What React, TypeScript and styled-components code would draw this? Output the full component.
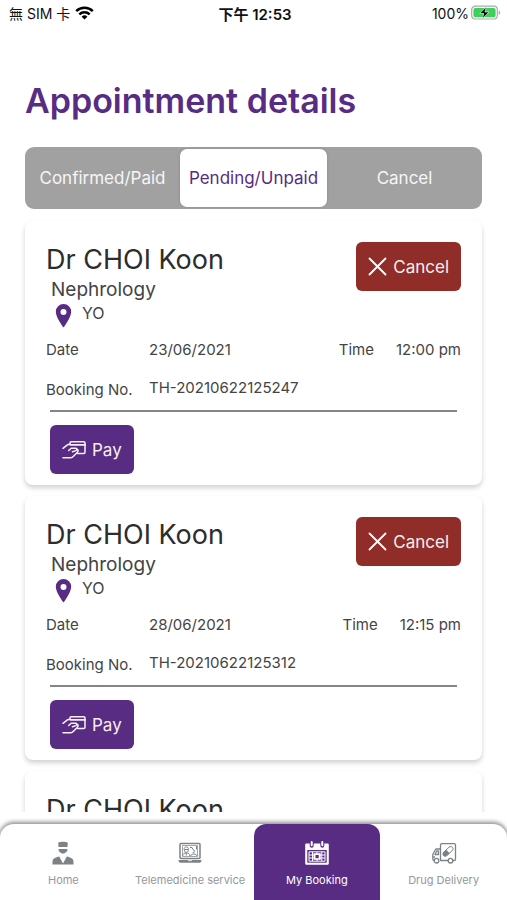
import React, { useState } from "react";
import styled, { createGlobalStyle } from "styled-components";

const purple = "#582c83";
const red = "#902d28";
const grey = "#94989b";

const GlobalStyle = createGlobalStyle`
  *, *::before, *::after { box-sizing: border-box; }
  body {
    margin: 0;
    background: #fff;
    color: #444;
    font-family: Inter, "Noto Sans CJK TC", sans-serif;
  }
  button { font: inherit; border: 0; cursor: pointer; }
  h1, h2, p, dl, dd, dt { margin: 0; font-weight: 400; }
`;

const Screen = styled.div`
  display: flex;
  flex-direction: column;
  height: 100vh;
  overflow: hidden;
`;

const StatusBar = styled.div`
  display: grid;
  grid-template-columns: 1fr auto 1fr;
  align-items: center;
  height: 28px;
  padding: 0 6px 2px 9px;
  color: #111;
  font-size: 14px;
  white-space: nowrap;
`;

const StatusSide = styled.div<{ $end?: boolean }>`
  display: flex;
  align-items: center;
  justify-content: ${(p) => (p.$end ? "flex-end" : "flex-start")};
  gap: ${(p) => (p.$end ? 2 : 5)}px;
`;

const Clock = styled.div`
  font-size: 15px;
  font-weight: 600;
`;

const Title = styled.h1`
  padding: 49px 25px 23px;
  color: ${purple};
  font-size: 34px;
  font-weight: 600;
  line-height: 47px;
`;

const Tabs = styled.div`
  display: grid;
  grid-template-columns: repeat(3, 1fr);
  flex: none;
  height: 62px;
  margin: 0 25px;
  padding: 2px;
  border-radius: 9px;
  background: #a1a1a1;
`;

const Tab = styled.button<{ $active: boolean }>`
  margin: 0 2px;
  padding: 0;
  border-radius: 7px;
  background: ${(p) => (p.$active ? "#fff" : "transparent")};
  box-shadow: ${(p) => (p.$active ? "0 0 3px rgba(0, 0, 0, 0.15)" : "none")};
  color: ${(p) => (p.$active ? purple : "#f6f6f6")};
  font-size: 17px;
`;

const List = styled.main`
  display: flex;
  flex: 1;
  flex-direction: column;
  gap: 11px;
  min-height: 0;
  overflow: hidden;
  padding: 12px 25px 0;
`;

const Card = styled.article`
  flex: none;
  padding: 21px 21px 11px;
  border-radius: 8px;
  background: #fff;
  box-shadow: 0 3px 5px rgba(0, 0, 0, 0.18);
`;

const CardHead = styled.header`
  display: flex;
  align-items: flex-start;
  justify-content: space-between;
`;

const Doctor = styled.h2`
  color: #2d2d2d;
  font-size: 27px;
  line-height: 36px;
`;

const Specialty = styled.p`
  padding-left: 5px;
  font-size: 19px;
  line-height: 23px;
`;

const Place = styled.p`
  display: flex;
  align-items: flex-start;
  gap: 10px;
  padding: 2px 0 0 9px;
  font-size: 16px;
  line-height: 21px;
`;

const ActionButton = styled.button<{ $tone: string }>`
  display: inline-flex;
  align-items: center;
  justify-content: center;
  gap: 6px;
  height: 49px;
  padding: 0 12px;
  border-radius: 6px;
  background: ${(p) => p.$tone};
  color: #f7eeee;
  font-size: 17px;
`;

const Details = styled.dl`
  display: grid;
  grid-template-columns: 103px 1fr auto;
  row-gap: 18px;
  padding-top: 12px;
  font-size: 15px;
  line-height: 20px;
`;

const TimePair = styled.div`
  display: flex;
  gap: 22px;
`;

const BookingLabel = styled.dt`
  padding-top: 2px;
`;

const BookingNumber = styled.dd`
  grid-column: 2 / 4;
`;

const CardFoot = styled.footer`
  display: flex;
  margin: 10px 4px 0;
  padding-top: 13px;
  border-top: 2px solid #858585;
`;

const Nav = styled.nav`
  display: grid;
  grid-template-columns: repeat(4, 1fr);
  flex: none;
  height: 76px;
  margin-top: 12px;
  border-radius: 14px 14px 0 0;
  background: #fff;
  box-shadow: 0 -1px 4px 1px rgba(0, 0, 0, 0.45);
`;

const NavLink = styled.a<{ $active?: boolean }>`
  display: flex;
  flex-direction: column;
  align-items: center;
  gap: 6px;
  padding-top: 16px;
  border-radius: 12px 12px 0 0;
  background: ${(p) => (p.$active ? purple : "transparent")};
  color: ${(p) => (p.$active ? "#fff" : grey)};
  font-size: 11px;
  line-height: 16px;
  text-decoration: none;
  white-space: nowrap;
`;

const WifiIcon = () => (
  <svg width="19" height="14" viewBox="0 0 19 14" fill="none" stroke="#000" strokeWidth="2.5">
    <path d="M1.2 5.2a11.8 11.8 0 0 1 16.6 0M4.3 8.4a7.4 7.4 0 0 1 10.4 0" />
    <path d="M9.5 13.6 6.6 10.7a4.1 4.1 0 0 1 5.8 0z" fill="#000" stroke="none" />
  </svg>
);

const BatteryIcon = () => (
  <svg width="30" height="16" viewBox="0 0 30 16">
    <rect x="0.7" y="1.2" width="25.6" height="12.8" rx="3.5" fill="#fff" stroke="#aaa" strokeWidth="1.2" />
    <rect x="2.4" y="2.9" width="22.2" height="9.4" rx="2" fill="#3bd15c" />
    <path d="M27.7 5.5c2 .5 2 3.7 0 4.2z" fill="#aaa" />
    <path d="M15.3 1.8 8.8 8.5h4l-1.4 5.2L18 7h-4z" fill="#000" stroke="#d9f8df" strokeWidth="0.7" />
  </svg>
);

const PinIcon = () => (
  <svg width="17" height="25" viewBox="0 0 17 25">
    <path
      fill={purple}
      fillRule="evenodd"
      d="M8.5 1A7.7 7.7 0 0 0 .8 8.7C.8 14.5 8.5 24.5 8.5 24.5s7.7-10 7.7-15.8A7.7 7.7 0 0 0 8.5 1zm0 4.9a3 3 0 1 1 0 6 3 3 0 0 1 0-6z"
    />
  </svg>
);

const CrossIcon = () => (
  <svg width="19" height="19" viewBox="0 0 19 19" stroke="#fff" strokeWidth="1.8" strokeLinecap="round">
    <path d="M1.5 1.5l16 16M17.5 1.5l-16 16" />
  </svg>
);

const PayIcon = () => (
  <svg width="24" height="18" viewBox="0 0 24 18" fill="none" stroke="#f7effc" strokeWidth="1.5" strokeLinecap="round" strokeLinejoin="round">
    <path d="M8 3.2V2c0-.8.400-1.200 1.200-1.200h12.600c.8 0 1.200.4 1.200 1.200v9.200c0 .8-.4 1.200-1.200 1.200h-6.200" />
    <path d="M8.500 3.900H23" strokeWidth="1.800" />
    <path d="M1 7.300 5.400 3.800l2.600-.6M14 7.200H9.200L6.700 9.500M14 7.200c1.400.5.800 2-.2 2.400l-3.300 1.200M15.600 8.500c.8 1 .5 2-.4 2.900l-4 4.200c-.7.8-1.400 1.200-2.300 1.200H1" />
  </svg>
);

const HomeIcon = () => (
  <svg width="24" height="26" viewBox="0 0 24 26" fill="#7c8286">
    <path d="M7.200 3c0-1 3-1.300 4.800-1.300s4.800.3 4.800 1.300L16.400 7H7.600z" />
    <path d="M7.600 9h8.800v.8c0 2-2.400 3.700-4.400 3.700S7.600 11.800 7.600 9.800z" />
    <path d="M1.500 24.500v-2.700c0-3.300 3-4.300 6.700-5.200l3.800 7 3.800-7c3.700.9 6.700 1.900 6.700 5.200v2.700z" />
  </svg>
);

const TelemedicineIcon = () => (
  <svg width="24" height="26" viewBox="0 0 24 26" fill="none" stroke="#7c8286">
    <rect x="2" y="3.500" width="20" height="15" rx="1" strokeWidth="1.500" />
    <path d="M4.500 5.500h15v11h-15z" strokeWidth=".7" />
    <path d="M6 9.500c0-3.500 4.500-3.500 4.500 0M6.400 9.500h3.800v1.300c0 2-3.800 2-3.800 0zM4.700 16c0-2.500 1.600-3 3.600-3s3.600.5 3.600 3M8.300 13v2.500M12 7.500h2l.8 1.500M14.700 9.500a1.700 1.700 0 1 1 0 3.400M18.500 6v3.500M12.700 16c.3-2.600 6-2.600 6.300 0" />
    <path d="M.5 20h23c0 1.700-.7 2.700-2 2.700h-19c-1.300 0-2-1-2-2.700z" fill="#7c8286" stroke="none" />
    <path d="M10 20.600h4" stroke="#fff" strokeWidth=".8" />
  </svg>
);

const BookingIcon = () => (
  <svg width="26" height="26" viewBox="0 0 26 26">
    <path d="M2.500 3.500h21c.8 0 1.300.5 1.300 1.300v18.400c0 1-.6 1.600-1.600 1.600H2.800c-1 0-1.600-.6-1.600-1.600V4.800c0-.8.5-1.300 1.300-1.300z" fill="#fff" />
    <path d="M3.300 10h19.400v12.700H3.300z" fill={purple} />
    <path d="M7.700 2.500v3.300M18.300 2.500v3.300" stroke={purple} strokeWidth="4" strokeLinecap="round" />
    <path d="M7.700 2v3.200M18.300 2v3.200" stroke="#fff" strokeWidth="2" strokeLinecap="round" />
    <path d="M5 11.800h16v9.400H5zM5 15h16M5 18h16M8.500 11.800v9.400M17.800 11.800v9.400M13 11.800v9.400" fill="none" stroke="#fff" strokeWidth="1" />
    <path d="M9.500 13.200h7.200v6.600H9.500z" fill="#fff" />
    <path d="M11.500 15h3.200v3.200h-3.200z" fill={purple} />
  </svg>
);

const DeliveryIcon = () => (
  <svg width="26" height="26" viewBox="0 0 26 26" fill="none" stroke="#7c8286" strokeWidth="1.300" strokeLinejoin="round" strokeLinecap="round">
    <path d="M9.500 20.500V5c0-.9.400-1.300 1.300-1.300h12.400c.9 0 1.300.4 1.300 1.300v14.200c0 .8-.4 1.300-1.300 1.300h-1.100M9.500 20.500h7.600" />
    <path d="M9.500 9H5.600c-.7 0-1 .2-1.300.8L1.800 14.500v4.600c0 .9.400 1.400 1.200 1.400M7.500 11H5.700L4 14.500h3.500zM1.800 17h1.700" />
    <circle cx="5.500" cy="20.700" r="2.300" />
    <circle cx="19.500" cy="20.700" r="2.300" />
    <path d="M12.700 12.200l5.300-5c2.700-2 5.400 1 3.200 3.400l-5.300 5c-2.700 2-5.400-1-3.200-3.400z" strokeWidth="1" />
    <path d="M15.200 9.800l3.400 3.400-2.700 2.400c-2.700 2-5.400-1-3.200-3.400z" fill="#7c8286" stroke="none" />
  </svg>
);

interface Appointment {
  date: string;
  time: string;
  booking: string;
}

const appointments: Appointment[] = [
  { date: "23/06/2021", time: "12:00 pm", booking: "TH-20210622125247" },
  { date: "28/06/2021", time: "12:15 pm", booking: "TH-20210622125312" },
  { date: "", time: "", booking: "" },
];

const AppointmentCard = ({ date, time, booking }: Appointment) => (
  <Card>
    <CardHead>
      <div>
        <Doctor>Dr CHOI Koon</Doctor>
        {date && (
          <>
            <Specialty>Nephrology</Specialty>
            <Place>
              <PinIcon />
              YO
            </Place>
          </>
        )}
      </div>
      {date && (
        <ActionButton type="button" $tone={red}>
          <CrossIcon />
          Cancel
        </ActionButton>
      )}
    </CardHead>
    {date && (
      <>
        <Details>
          <dt>Date</dt>
          <dd>{date}</dd>
          <TimePair>
            <dt>Time</dt>
            <dd>{time}</dd>
          </TimePair>
          <BookingLabel>Booking No.</BookingLabel>
          <BookingNumber>{booking}</BookingNumber>
        </Details>
        <CardFoot>
          <ActionButton type="button" $tone={purple}>
            <PayIcon />
            Pay
          </ActionButton>
        </CardFoot>
      </>
    )}
  </Card>
);

const tabs = ["Confirmed/Paid", "Pending/Unpaid", "Cancel"];

export default function App() {
  const [active, setActive] = useState(tabs[1]);
  return (
    <Screen>
      <GlobalStyle />
      <StatusBar>
        <StatusSide>
          無 SIM 卡
          <WifiIcon />
        </StatusSide>
        <Clock>下午 12:53</Clock>
        <StatusSide $end>
          100%
          <BatteryIcon />
        </StatusSide>
      </StatusBar>
      <Title>Appointment details</Title>
      <Tabs role="tablist">
        {tabs.map((tab) => (
          <Tab
            key={tab}
            type="button"
            role="tab"
            aria-selected={tab === active}
            $active={tab === active}
            onClick={() => setActive(tab)}
          >
            {tab}
          </Tab>
        ))}
      </Tabs>
      <List>
        {appointments.map((item, index) => (
          <AppointmentCard key={index} {...item} />
        ))}
      </List>
      <Nav>
        <NavLink href="#home">
          <HomeIcon />
          Home
        </NavLink>
        <NavLink href="#telemedicine">
          <TelemedicineIcon />
          Telemedicine service
        </NavLink>
        <NavLink href="#booking" $active aria-current="page">
          <BookingIcon />
          My Booking
        </NavLink>
        <NavLink href="#delivery">
          <DeliveryIcon />
          Drug Delivery
        </NavLink>
      </Nav>
    </Screen>
  );
}
